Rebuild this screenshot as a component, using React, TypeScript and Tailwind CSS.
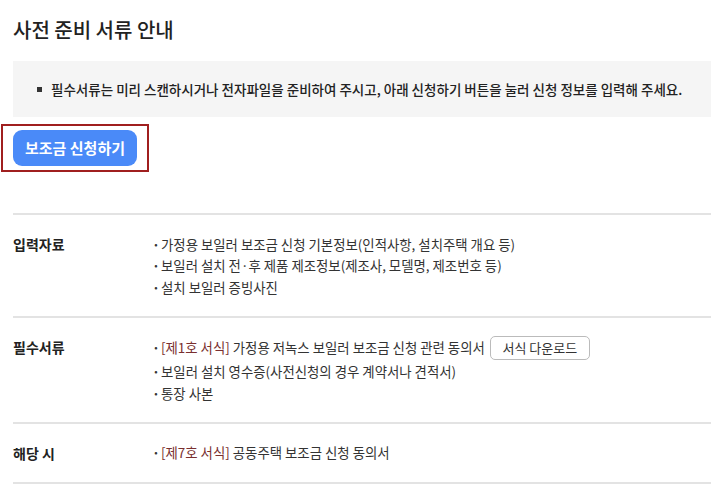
const rows = [
  {
    label: '입력자료',
    items: [
      { text: '가정용 보일러 보조금 신청 기본정보(인적사항, 설치주택 개요 등)' },
      { text: '보일러 설치 전·후 제품 제조정보(제조사, 모델명, 제조번호 등)' },
      { text: '설치 보일러 증빙사진' },
    ],
  },
  {
    label: '필수서류',
    items: [
      { form: '[제1호 서식]', text: ' 가정용 저녹스 보일러 보조금 신청 관련 동의서', download: true },
      { text: '보일러 설치 영수증(사전신청의 경우 계약서나 견적서)' },
      { text: '통장 사본' },
    ],
  },
  {
    label: '해당 시',
    items: [{ form: '[제7호 서식]', text: ' 공동주택 보조금 신청 동의서' }],
  },
];

export default function App() {
  return (
    <div
      className="h-[491px] w-[711px] overflow-hidden bg-white pl-[13px] text-[#222]"
      style={{ fontFamily: '"Noto Sans CJK KR", "Noto Sans", sans-serif' }}
    >
      <h2 className="pt-[17px] text-[20px] leading-[26px] font-medium">사전 준비 서류 안내</h2>

      <div className="mt-[18px] flex h-[56px] w-[720px] items-center bg-[#f5f5f5] pl-[24px]">
        <span className="mr-[9px] h-[5px] w-[5px] bg-[#333]" />
        <p className="text-[13.5px] font-medium text-[#222]">
          필수서류는 미리 스캔하시거나 전자파일을 준비하여 주시고, 아래 신청하기 버튼을 눌러 신청 정보를 입력해 주세요.
        </p>
      </div>

      <div className="mt-[7px] -ml-[12px] w-[148px] border-2 border-[#a01f1f] py-[4px] pl-[10px]">
        <button className="h-[36px] w-[124px] rounded-[9px] bg-[#4a8af8] text-[15px] font-semibold text-white">
          보조금 신청하기
        </button>
      </div>

      <div className="mt-[41px] w-[720px] border-t-2 border-[#e3e3e3]">
        {rows.map((row) => (
          <div key={row.label} className="flex border-b-2 border-[#e3e3e3] py-[18px]">
            <div className="w-[139px] shrink-0 text-[14px] leading-[22px] font-bold text-[#222]">{row.label}</div>
            <ul className="flex flex-col text-[13.4px] text-[#333]">
              {row.items.map((item, i) => (
                <li key={i} className={`flex items-center ${item.download ? 'h-[25px] pb-[1px]' : 'h-[21.5px]'}`}>
                  <span className="w-[9px] font-bold">·</span>
                  {item.form && <span className="text-[#7a2f2f]">{item.form}</span>}
                  <span className="whitespace-pre">{item.text}</span>
                  {item.download && (
                    <button className="ml-[5px] h-[24px] w-[100px] rounded-[5px] border border-[#bbb] bg-white text-[13px] text-[#333]">
                      서식 다운로드
                    </button>
                  )}
                </li>
              ))}
            </ul>
          </div>
        ))}
      </div>
    </div>
  );
}
